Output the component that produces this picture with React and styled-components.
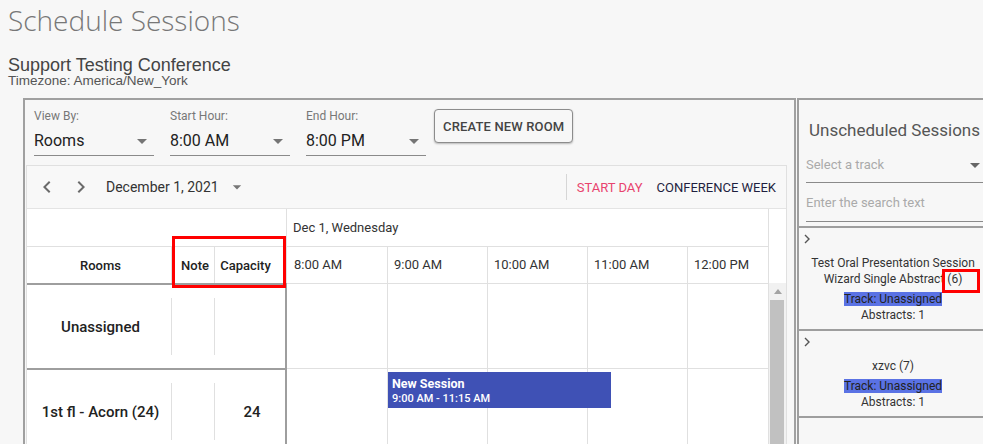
import React from 'react';
import styled, { createGlobalStyle } from 'styled-components';

const Global = createGlobalStyle`
  html, body { margin: 0; padding: 0; background: #f7f7f7; overflow: hidden; }
  body { font-family: Roboto, "Noto Sans", sans-serif; width: 983px; height: 444px; }
  * { box-sizing: border-box; }
`;

const Page = styled.div`
  width: 1000px;
  height: 444px;
  overflow: hidden;
`;

const Header = styled.header`
  padding-left: 8px;
`;

const Title = styled.h1`
  margin: 0;
  font: 300 28px/41px "Open Sans", sans-serif;
  color: #777;
`;

const ConfName = styled.div`
  margin-top: 15px;
  font: 18px/18px "Liberation Sans", Arial, sans-serif;
  color: #444;
`;

const Timezone = styled.div`
  font: 13.5px/14px "Liberation Sans", Arial, sans-serif;
  color: #555;
`;

const Workspace = styled.div`
  display: flex;
  align-items: flex-start;
  margin-top: 10px;
  padding-left: 23px;
`;

const MainPanel = styled.section`
  width: 773px;
  height: 360px;
  border: 2px solid #a0a0a0;
  border-bottom: none;
  padding: 9px 9px 0 9px;
  overflow: hidden;
`;

const Controls = styled.div`
  display: flex;
  align-items: flex-start;
`;

const Field = styled.div`
  display: flex;
  flex-direction: column;
  width: 120px;
  margin-right: ${p => p.$gap}px;
`;

const FieldLabel = styled.label`
  font-size: 12px;
  line-height: 14px;
  color: #777;
`;

const SelectBox = styled.div`
  margin-top: 4px;
  height: 29px;
  display: flex;
  align-items: center;
  justify-content: space-between;
  border-bottom: 1px solid #8a8a8a;
  font-size: 16px;
  color: #222;
  padding-bottom: 1px;
`;

const OutlineButton = styled.button`
  height: 34px;
  padding: 0 8px;
  border: 1px solid #8c8c8c;
  border-radius: 4px;
  background: #f7f7f7;
  box-shadow: 0 1px 2px rgba(0, 0, 0, 0.25);
  font: 500 13px Roboto, sans-serif;
  letter-spacing: 0.15px;
  color: #444;
`;

const Calendar = styled.div`
  position: relative;
  margin: 9px -2px 0 -8px;
  border: 1px solid #e0e0e0;
  background: #fff;
`;

const Toolbar = styled.div`
  height: 43px;
  display: flex;
  align-items: center;
  background: #f8f8f8;
  border-bottom: 1px solid #e4e4e4;
  padding: 0 10px 0 8px;
`;

const NavIcon = styled.span`
  display: flex;
  width: 24px;
  height: 24px;
  margin-right: ${p => p.$mr || 0}px;
  color: ${p => p.$color || '#6b6b6b'};
`;

const DateLabel = styled.span`
  margin-left: 3px;
  font-size: 14px;
  color: #333;
`;

const DateCaret = styled.span`
  display: flex;
  margin-left: 8px;
  color: #777;
`;

const Spacer = styled.div`
  flex: 1;
`;

const Divider = styled.div`
  width: 1px;
  height: 26px;
  background: #d6d6d6;
  margin-right: 10px;
`;

const ViewLink = styled.span`
  font-size: 13px;
  color: ${p => p.$color};
  margin-right: ${p => p.$mr || 0}px;
`;

const TableHead = styled.div`
  display: flex;
  height: 74px;
`;

const HeadLeft = styled.div`
  width: 260px;
  border-right: 1px solid #e0e0e0;
  display: flex;
  flex-direction: column;
`;

const HeadBlank = styled.div`
  height: 38px;
  border-bottom: 1px solid #e0e0e0;
`;

const HeadCols = styled.div`
  flex: 1;
  display: flex;
`;

const HeadCell = styled.div`
  width: ${p => p.$w}px;
  display: flex;
  align-items: center;
  justify-content: center;
  padding: 0 ${p => p.$pr || 0}px 0 ${p => p.$pl || 0}px;
  font-size: 13px;
  font-weight: 500;
  color: #222;
  border-left: ${p => (p.$line ? '1px solid #e0e0e0' : 'none')};
`;

const HeadRight = styled.div`
  flex: 1;
  min-width: 0;
  border-right: 1px solid #e0e0e0;
  display: flex;
  flex-direction: column;
  overflow: hidden;
`;

const DayLabel = styled.div`
  height: 38px;
  line-height: 37px;
  padding-left: 6px;
  font-size: 13px;
  color: #333;
  border-bottom: 1px solid #e0e0e0;
  white-space: nowrap;
`;

const TimeRow = styled.div`
  flex: 1;
  display: flex;
  padding-left: 1px;
`;

const TimeHead = styled.div`
  flex: 0 0 100px;
  border-right: 1px solid #e0e0e0;
  padding-left: 6px;
  line-height: 36px;
  font-size: 13px;
  color: #333;
  white-space: nowrap;
`;

const Gutter = styled.div`
  width: 17px;
`;

const TableBody = styled.div`
  display: flex;
`;

const Rows = styled.div`
  flex: 1;
  min-width: 0;
`;

const Row = styled.div`
  display: flex;
  height: 85px;
`;

const RoomBlock = styled.div`
  width: 260px;
  display: flex;
  border-top: 2px solid #9e9e9e;
  border-right: 2px solid #9e9e9e;
`;

const RoomName = styled.div`
  width: 144px;
  display: flex;
  align-items: center;
  justify-content: center;
  padding-left: 3px;
  font-size: 15px;
  font-weight: 500;
  color: #222;
`;

const MetaCell = styled.div`
  width: ${p => p.$w}px;
  margin: 13px 0;
  border-left: 1px solid #e0e0e0;
  display: flex;
  align-items: center;
  justify-content: center;
  padding-left: ${p => p.$pl || 0}px;
  font-size: 15px;
  font-weight: 500;
  color: #222;
`;

const Slots = styled.div`
  position: relative;
  flex: 1;
  min-width: 0;
  display: flex;
  padding-left: 1px;
  border-top: 1px solid #e0e0e0;
  border-right: 1px solid #e0e0e0;
  overflow: hidden;
`;

const Slot = styled.div`
  flex: 0 0 100px;
  border-right: 1px solid #e0e0e0;
`;

const EventBlock = styled.div`
  position: absolute;
  top: 3px;
  height: 36px;
  background: #3f51b5;
  color: #fff;
  padding: 4px 0 0 4px;
`;

const EventTitle = styled.div`
  font-size: 12.5px;
  font-weight: 700;
  line-height: 15px;
`;

const EventTime = styled.div`
  font-size: 11px;
  font-weight: 500;
  line-height: 15px;
`;

const ScrollTrack = styled.div`
  width: 17px;
  background: #f1f1f1;
  display: flex;
  flex-direction: column;
`;

const ScrollArrow = styled.div`
  height: 17px;
  display: flex;
  align-items: center;
  justify-content: center;
  color: #a3a3a3;
`;

const ScrollThumb = styled.div`
  flex: 1;
  margin: 0 2px 0 1px;
  background: #c1c1c1;
`;

const Callout = styled.div`
  position: absolute;
  border: 3px solid #ff0000;
  pointer-events: none;
`;

const Sidebar = styled.aside`
  width: 190px;
  height: 360px;
  margin-left: 1px;
  border-left: 2px solid #9e9e9e;
  border-top: 2px solid #9e9e9e;
`;

const SideTitle = styled.h2`
  margin: 19px 0 0 10px;
  font: 400 17px/22px Roboto, sans-serif;
  color: #555;
  white-space: nowrap;
`;

const Filters = styled.div`
  padding-left: 7px;
`;

const TrackSelect = styled.div`
  margin-top: 8px;
  height: 34px;
  display: flex;
  align-items: flex-end;
  justify-content: space-between;
  padding-bottom: 9px;
  border-bottom: 1px solid #8a8a8a;
  font-size: 13px;
  line-height: 16px;
  color: #aaa;
`;

const SearchBox = styled.div`
  height: 39px;
  display: flex;
  align-items: flex-end;
  padding-bottom: 10px;
  border-bottom: 1px solid #8a8a8a;
  font-size: 13px;
  line-height: 16px;
  color: #aaa;
`;

const CardList = styled.div`
  margin-top: 4px;
  border-top: 2px solid #9e9e9e;
`;

const Card = styled.div`
  position: relative;
  padding: 3px 0 6px 0;
  border-bottom: 2px solid #9e9e9e;
  text-align: center;
  font-size: 12px;
  line-height: 16px;
  color: #333;
`;

const Expander = styled.div`
  height: 16px;
  display: flex;
  align-items: center;
  padding-left: 5px;
  color: #555;
`;

const CardTitle = styled.div`
  margin-top: 8px;
`;

const TrackTag = styled.div`
  margin-top: 4px;
  span {
    background: #5a72e4;
    color: #222;
  }
`;

const Caret = ({ size = 24 }) => (
  <svg width={size} height={size} viewBox="0 0 24 24" fill="currentColor">
    <path d="M7 10l5 5 5-5z" />
  </svg>
);

const ChevronLeft = () => (
  <svg width="24" height="24" viewBox="0 0 24 24" fill="currentColor">
    <path d="M15.41 7.41 14 6l-6 6 6 6 1.41-1.41L10.83 12z" />
  </svg>
);

const ChevronRight = () => (
  <svg width="24" height="24" viewBox="0 0 24 24" fill="currentColor">
    <path d="M10 6 8.59 7.41 13.17 12l-4.58 4.59L10 18l6-6z" />
  </svg>
);

const SmallChevron = () => (
  <svg width="6" height="10" viewBox="0 0 6 10" fill="none" stroke="currentColor" strokeWidth="1.4">
    <polyline points="1,1 5,5 1,9" />
  </svg>
);

const UpTriangle = () => (
  <svg width="8" height="5" viewBox="0 0 8 5" fill="currentColor">
    <path d="M0 5 L4 0 L8 5z" />
  </svg>
);

const hours = ['8:00 AM', '9:00 AM', '10:00 AM', '11:00 AM', '12:00 PM'];

const rooms = [
  { name: 'Unassigned', capacity: '' },
  {
    name: '1st fl - Acorn (24)',
    capacity: '24',
    events: [{ title: 'New Session', time: '9:00 AM - 11:15 AM', start: 9, end: 11.25 }],
  },
];

const cards = [
  { title: ['Test Oral Presentation Session', 'Wizard Single Abstract (6)'], callout: true },
  { title: ['xzvc (7)'] },
];

const fields = [
  { label: 'View By:', value: 'Rooms', gap: 16 },
  { label: 'Start Hour:', value: '8:00 AM', gap: 16 },
  { label: 'End Hour:', value: '8:00 PM', gap: 8 },
];

export default function App() {
  return (
    <Page>
      <Global />
      <Header>
        <Title>Schedule Sessions</Title>
        <ConfName>Support Testing Conference</ConfName>
        <Timezone>Timezone: America/New_York</Timezone>
      </Header>
      <Workspace>
        <MainPanel>
          <Controls>
            {fields.map(f => (
              <Field key={f.label} $gap={f.gap}>
                <FieldLabel>{f.label}</FieldLabel>
                <SelectBox>
                  <span>{f.value}</span>
                  <NavIcon $color="#757575">
                    <Caret />
                  </NavIcon>
                </SelectBox>
              </Field>
            ))}
            <OutlineButton>CREATE NEW ROOM</OutlineButton>
          </Controls>
          <Calendar>
            <Toolbar>
              <NavIcon $mr={10}>
                <ChevronLeft />
              </NavIcon>
              <NavIcon $mr={10}>
                <ChevronRight />
              </NavIcon>
              <DateLabel>December 1, 2021</DateLabel>
              <DateCaret>
                <Caret size={20} />
              </DateCaret>
              <Spacer />
              <Divider />
              <ViewLink $color="#e8436e" $mr={14}>START DAY</ViewLink>
              <ViewLink $color="#1f1f3f">CONFERENCE WEEK</ViewLink>
            </Toolbar>
            <TableHead>
              <HeadLeft>
                <HeadBlank />
                <HeadCols>
                  <HeadCell $w={144} $pl={3}>Rooms</HeadCell>
                  <HeadCell $w={43} $pl={4} $line>Note</HeadCell>
                  <HeadCell $w={72} $pr={10} $line>Capacity</HeadCell>
                </HeadCols>
              </HeadLeft>
              <HeadRight>
                <DayLabel>Dec 1, Wednesday</DayLabel>
                <TimeRow>
                  {hours.map(h => (
                    <TimeHead key={h}>{h}</TimeHead>
                  ))}
                </TimeRow>
              </HeadRight>
              <Gutter />
            </TableHead>
            <TableBody>
              <Rows>
                {rooms.map(r => (
                  <Row key={r.name}>
                    <RoomBlock>
                      <RoomName>{r.name}</RoomName>
                      <MetaCell $w={43} />
                      <MetaCell $w={71} $pl={4}>{r.capacity}</MetaCell>
                    </RoomBlock>
                    <Slots>
                      {hours.map(h => (
                        <Slot key={h} />
                      ))}
                      {(r.events || []).map(e => (
                        <EventBlock
                          key={e.title}
                          style={{ left: (e.start - 8) * 100 + 1, width: (e.end - e.start) * 100 - 2 }}
                        >
                          <EventTitle>{e.title}</EventTitle>
                          <EventTime>{e.time}</EventTime>
                        </EventBlock>
                      ))}
                    </Slots>
                  </Row>
                ))}
              </Rows>
              <ScrollTrack>
                <ScrollArrow>
                  <UpTriangle />
                </ScrollArrow>
                <ScrollThumb />
              </ScrollTrack>
            </TableBody>
            <Callout style={{ left: 145, top: 70, width: 114, height: 52 }} />
          </Calendar>
        </MainPanel>
        <Sidebar>
          <SideTitle>Unscheduled Sessions</SideTitle>
          <Filters>
            <TrackSelect>
              <span>Select a track</span>
              <NavIcon $color="#666" style={{ marginBottom: -4 }}>
                <Caret />
              </NavIcon>
            </TrackSelect>
            <SearchBox>Enter the search text</SearchBox>
          </Filters>
          <CardList>
            {cards.map(c => (
              <Card key={c.title[0]}>
                <Expander>
                  <SmallChevron />
                </Expander>
                <CardTitle>
                  {c.title.map(t => (
                    <div key={t}>{t}</div>
                  ))}
                </CardTitle>
                <TrackTag>
                  <span>Track: Unassigned</span>
                </TrackTag>
                <div>Abstracts: 1</div>
                {c.callout && <Callout style={{ left: 143, top: 41, width: 38, height: 24 }} />}
              </Card>
            ))}
          </CardList>
        </Sidebar>
      </Workspace>
    </Page>
  );
}
